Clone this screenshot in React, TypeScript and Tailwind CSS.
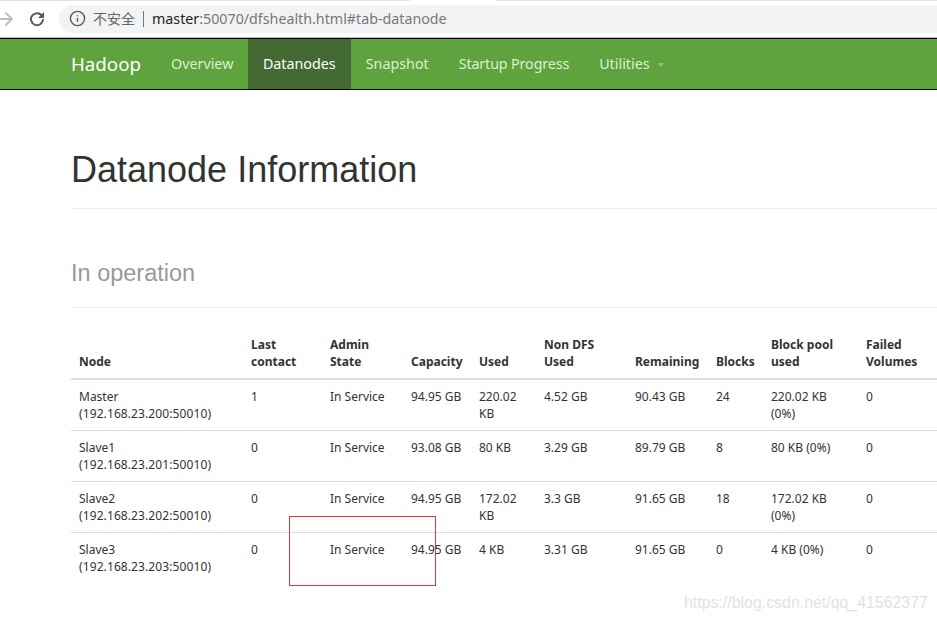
import React from 'react'
import { Info, ArrowRight } from 'lucide-react'

const navItems = ['Overview', 'Datanodes', 'Snapshot', 'Startup Progress', 'Utilities']

const columns = [
  { label: ['Node'], width: 'w-[172px]' },
  { label: ['Last', 'contact'], width: 'w-[79px]' },
  { label: ['Admin', 'State'], width: 'w-[81px]' },
  { label: ['Capacity'], width: 'w-[68px]' },
  { label: ['Used'], width: 'w-[65px]' },
  { label: ['Non DFS', 'Used'], width: 'w-[91px]' },
  { label: ['Remaining'], width: 'w-[81px]' },
  { label: ['Blocks'], width: 'w-[55px]' },
  { label: ['Block pool', 'used'], width: 'w-[95px]' },
  { label: ['Failed', 'Volumes'], width: 'w-[90px]' },
]

const rows = [
  ['Master', '192.168.23.200:50010', '1', '94.95 GB', ['220.02', 'KB'], '4.52 GB', '90.43 GB', '24', ['220.02 KB', '(0%)']],
  ['Slave1', '192.168.23.201:50010', '0', '93.08 GB', ['80 KB'], '3.29 GB', '89.79 GB', '8', ['80 KB (0%)']],
  ['Slave2', '192.168.23.202:50010', '0', '94.95 GB', ['172.02', 'KB'], '3.3 GB', '91.65 GB', '18', ['172.02 KB', '(0%)']],
  ['Slave3', '192.168.23.203:50010', '0', '94.95 GB', ['4 KB'], '3.31 GB', '91.65 GB', '0', ['4 KB (0%)']],
] as const

const App = () => {
  return (
    <div className="relative h-[618px] w-[937px] overflow-hidden bg-white font-['Liberation_Sans',sans-serif] text-[#333]">
      {/* browser bar */}
      <div className="flex h-[38px] items-center border-b border-[#b8b8b8]">
        <ArrowRight size={20} strokeWidth={2.4} className="ml-[-4px] text-[#bdbdbd]" />
        <svg width="16" height="16" viewBox="0 0 16 16" className="ml-[13px] text-[#5a5a5a]">
          <path d="M13.2 5.2A6 6 0 1 0 14 8" fill="none" stroke="currentColor" strokeWidth="2" />
          <path d="M15 1v6H9z" fill="currentColor" />
        </svg>
        <div className="ml-[14px] flex h-[28px] flex-1 items-center rounded-l-full bg-[#f1f3f4] pl-[10px] text-[14px]">
          <Info size={17} strokeWidth={2} className="text-[#5a5a5a]" />
          <span className="ml-[7px] font-['Noto_Sans_CJK_SC',sans-serif] text-[14px] text-[#666]">不安全</span>
          <span className="ml-[8px] h-[16px] w-px bg-[#777]" />
          <span className="ml-[8px] font-['Noto_Sans',sans-serif] text-[14.25px] text-[#777]">
            <span className="text-[#222]">master</span>:50070/dfshealth.html#tab-datanode
          </span>
        </div>
      </div>

      {/* navbar */}
      <nav className="flex h-[52px] items-stretch border-y border-black bg-[#5fa33e] pl-[71px] font-['Noto_Sans',sans-serif]">
        <div className="mr-[15px] flex w-[69px] items-center whitespace-nowrap text-[18.7px] text-white">Hadoop</div>
        {navItems.map((item) => (
          <div
            key={item}
            className={`flex items-center px-[15px] text-[14.3px] ${
              item === 'Datanodes' ? 'bg-[#446a33] text-white' : 'text-[#dcefd2]'
            } ${item === 'Startup Progress' ? 'tracking-[-0.13px]' : ''} ${item === 'Overview' ? 'pl-[16px] pr-[14.5px]' : ''}`}
          >
            {item}
            {item === 'Utilities' && (
              <span className="ml-[8px] mt-[2px] h-0 w-0 border-x-[3.5px] border-t-[4px] border-x-transparent border-t-[#a9a9a0]" />
            )}
          </div>
        ))}
      </nav>

      <main className="pl-[71px]">
        <div className="mt-[60px] border-b border-[#eeeeee] pb-[18px]">
          <h1 className="text-[36px] leading-[40px] text-[#333]">Datanode Information</h1>
        </div>
        <div className="mt-[49px] border-b border-[#eeeeee] pb-[19px]">
          <h2 className="text-[23.5px] leading-[30px] text-[#999]">In operation</h2>
        </div>

        <table className="mt-[20px] w-[866px] table-fixed border-collapse font-['Noto_Sans',sans-serif] text-[12px] leading-[17px]">
          <thead>
            <tr className="border-b-2 border-[#ddd]">
              {columns.map((col) => (
                <th key={col.label[0]} className={`${col.width} px-[8px] py-[8px] text-left align-bottom font-bold text-[#333]`}>
                  {col.label.map((line) => (
                    <div key={line}>{line}</div>
                  ))}
                </th>
              ))}
            </tr>
          </thead>
          <tbody>
            {rows.map((r, i) => (
              <tr key={r[0]} className={i < rows.length - 1 ? 'border-b border-[#ddd]' : ''}>
                <td className="p-[8px] align-top">
                  <div>{r[0]}</div>
                  <div className="tracking-[0.1px]">({r[1]})</div>
                </td>
                <td className="p-[8px] align-top">{r[2]}</td>
                <td className="p-[8px] align-top">In Service</td>
                <td className="p-[8px] align-top">{r[3]}</td>
                <td className="p-[8px] align-top">
                  {r[4].map((line) => (
                    <div key={line}>{line}</div>
                  ))}
                </td>
                <td className="p-[8px] align-top">{r[5]}</td>
                <td className="p-[8px] align-top">{r[6]}</td>
                <td className="p-[8px] align-top">{r[7]}</td>
                <td className="p-[8px] align-top">
                  {r[8].map((line) => (
                    <div key={line}>{line}</div>
                  ))}
                </td>
                <td className="p-[8px] align-top">0</td>
              </tr>
            ))}
          </tbody>
        </table>
      </main>

      {/* annotation + watermark sit over the page */}
      <div className="absolute left-[289px] top-[516px] h-[70px] w-[147px] border border-[#e0393a]" />
      <div className="absolute left-[684px] top-[591px] text-[15.9px] text-[#e2e2e2]">https://blog.csdn.net/qq_41562377</div>
      <div className="absolute left-0 top-0 h-px w-[410px] bg-[#e4e4e4]" />
      <div className="absolute left-[497px] top-0 h-px w-[440px] bg-[#e4e4e4]" />
    </div>
  )
}

export default App
